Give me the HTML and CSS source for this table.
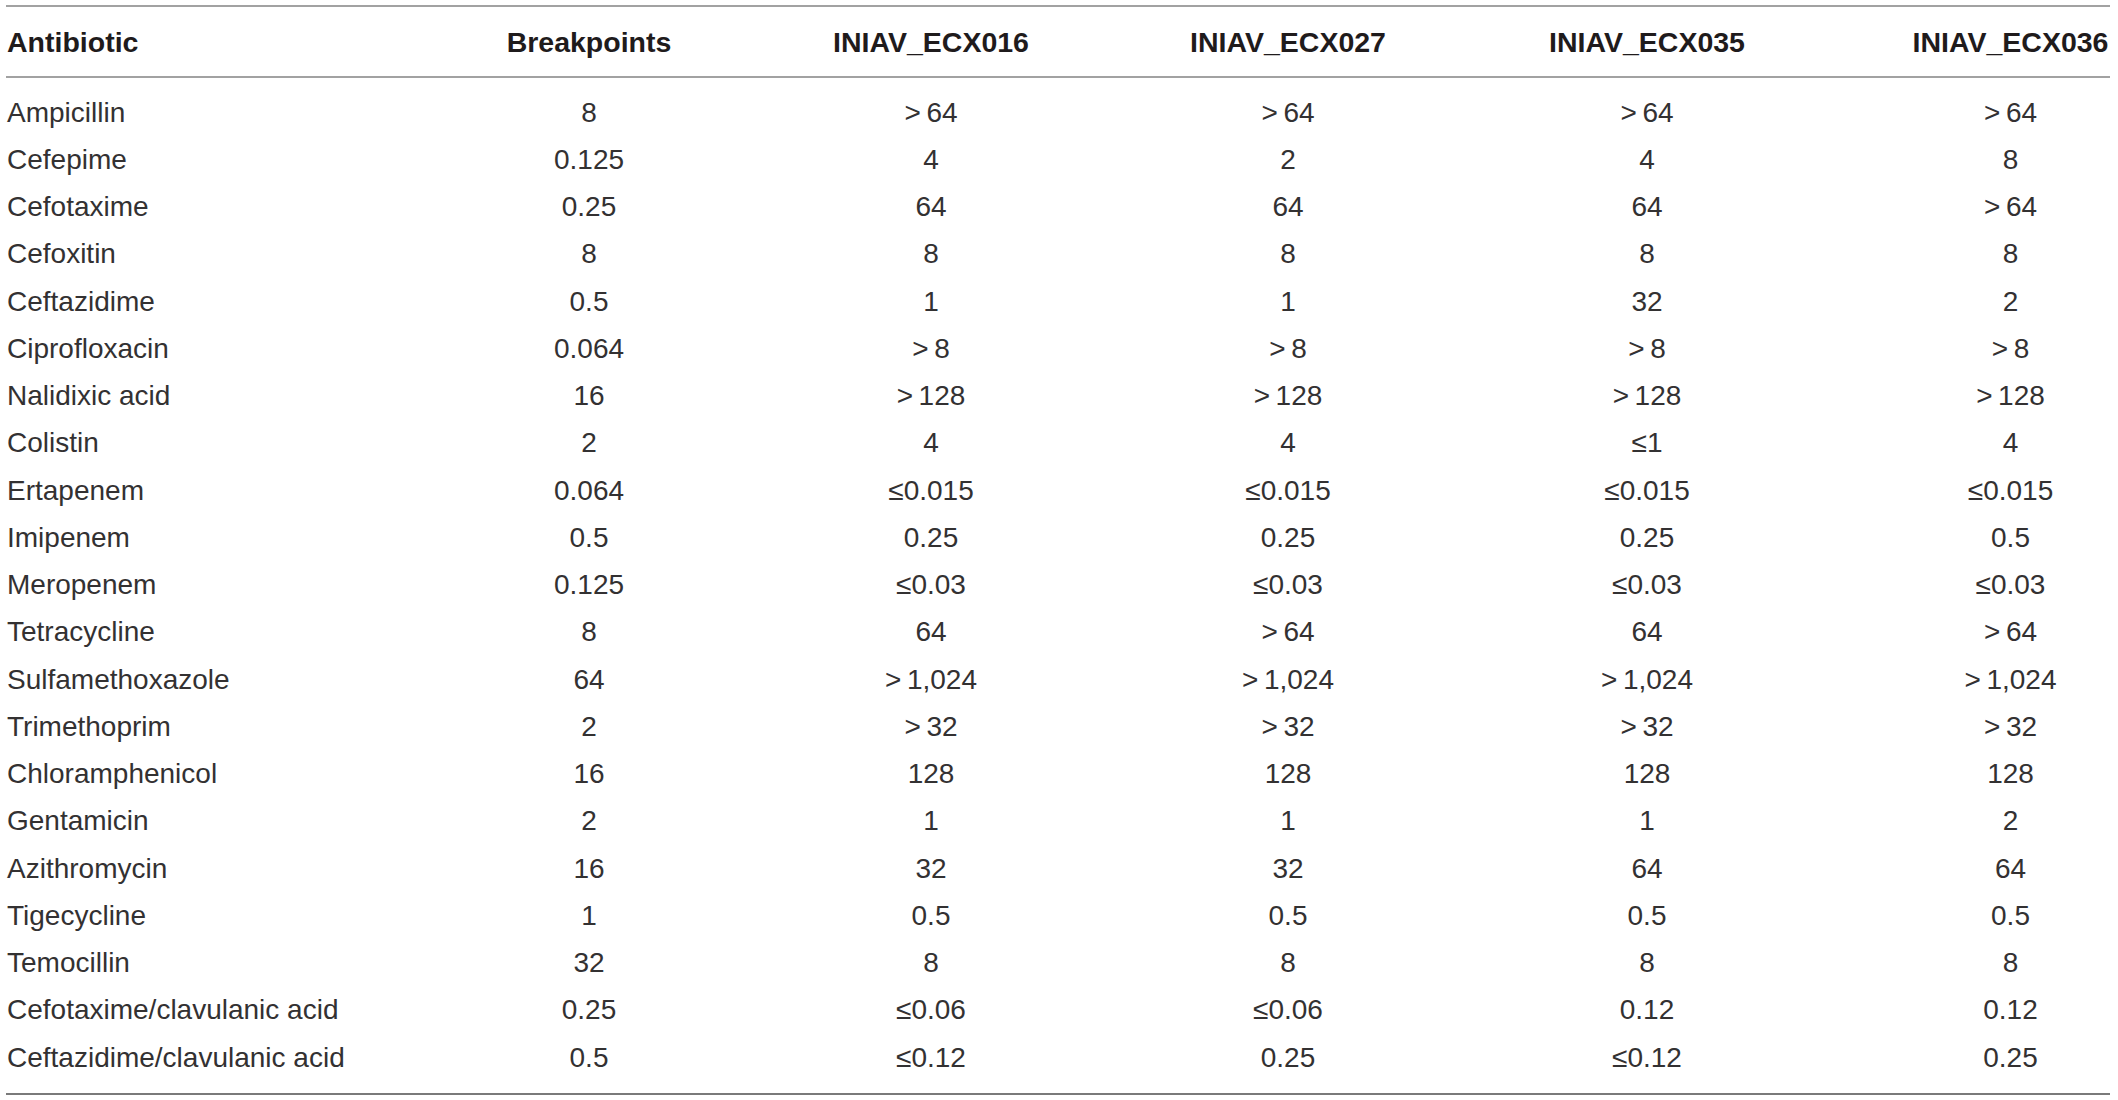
FILE: index.html
```html
<!DOCTYPE html>
<html lang="en">
<head>
<meta charset="utf-8">
<title>Antibiotic MIC table</title>
<link rel="stylesheet" href="styles.css">
</head>
<body>
<table class="mic">
  <colgroup>
    <col class="c-name">
    <col class="c-bp">
    <col class="c-016">
    <col class="c-027">
    <col class="c-035">
    <col class="c-036">
  </colgroup>
  <thead>
    <tr>
      <th class="name">Antibiotic</th>
      <th>Breakpoints</th>
      <th>INIAV_ECX016</th>
      <th>INIAV_ECX027</th>
      <th>INIAV_ECX035</th>
      <th class="last">INIAV_ECX036</th>
    </tr>
  </thead>
  <tbody>
    <tr><td class="name">Ampicillin</td><td>8</td><td>&gt;&thinsp;64</td><td>&gt;&thinsp;64</td><td>&gt;&thinsp;64</td><td class="last">&gt;&thinsp;64</td></tr>
    <tr><td class="name">Cefepime</td><td>0.125</td><td>4</td><td>2</td><td>4</td><td class="last">8</td></tr>
    <tr><td class="name">Cefotaxime</td><td>0.25</td><td>64</td><td>64</td><td>64</td><td class="last">&gt;&thinsp;64</td></tr>
    <tr><td class="name">Cefoxitin</td><td>8</td><td>8</td><td>8</td><td>8</td><td class="last">8</td></tr>
    <tr><td class="name">Ceftazidime</td><td>0.5</td><td>1</td><td>1</td><td>32</td><td class="last">2</td></tr>
    <tr><td class="name">Ciprofloxacin</td><td>0.064</td><td>&gt;&thinsp;8</td><td>&gt;&thinsp;8</td><td>&gt;&thinsp;8</td><td class="last">&gt;&thinsp;8</td></tr>
    <tr><td class="name">Nalidixic acid</td><td>16</td><td>&gt;&thinsp;128</td><td>&gt;&thinsp;128</td><td>&gt;&thinsp;128</td><td class="last">&gt;&thinsp;128</td></tr>
    <tr><td class="name">Colistin</td><td>2</td><td>4</td><td>4</td><td>&le;1</td><td class="last">4</td></tr>
    <tr><td class="name">Ertapenem</td><td>0.064</td><td>&le;0.015</td><td>&le;0.015</td><td>&le;0.015</td><td class="last">&le;0.015</td></tr>
    <tr><td class="name">Imipenem</td><td>0.5</td><td>0.25</td><td>0.25</td><td>0.25</td><td class="last">0.5</td></tr>
    <tr><td class="name">Meropenem</td><td>0.125</td><td>&le;0.03</td><td>&le;0.03</td><td>&le;0.03</td><td class="last">&le;0.03</td></tr>
    <tr><td class="name">Tetracycline</td><td>8</td><td>64</td><td>&gt;&thinsp;64</td><td>64</td><td class="last">&gt;&thinsp;64</td></tr>
    <tr><td class="name">Sulfamethoxazole</td><td>64</td><td>&gt;&thinsp;1,024</td><td>&gt;&thinsp;1,024</td><td>&gt;&thinsp;1,024</td><td class="last">&gt;&thinsp;1,024</td></tr>
    <tr><td class="name">Trimethoprim</td><td>2</td><td>&gt;&thinsp;32</td><td>&gt;&thinsp;32</td><td>&gt;&thinsp;32</td><td class="last">&gt;&thinsp;32</td></tr>
    <tr><td class="name">Chloramphenicol</td><td>16</td><td>128</td><td>128</td><td>128</td><td class="last">128</td></tr>
    <tr><td class="name">Gentamicin</td><td>2</td><td>1</td><td>1</td><td>1</td><td class="last">2</td></tr>
    <tr><td class="name">Azithromycin</td><td>16</td><td>32</td><td>32</td><td>64</td><td class="last">64</td></tr>
    <tr><td class="name">Tigecycline</td><td>1</td><td>0.5</td><td>0.5</td><td>0.5</td><td class="last">0.5</td></tr>
    <tr><td class="name">Temocillin</td><td>32</td><td>8</td><td>8</td><td>8</td><td class="last">8</td></tr>
    <tr><td class="name">Cefotaxime/clavulanic acid</td><td>0.25</td><td>&le;0.06</td><td>&le;0.06</td><td>0.12</td><td class="last">0.12</td></tr>
    <tr><td class="name">Ceftazidime/clavulanic acid</td><td>0.5</td><td>&le;0.12</td><td>0.25</td><td>&le;0.12</td><td class="last">0.25</td></tr>
  </tbody>
</table>
</body>
</html>
```
FILE: styles.css
```css
html, body {
  margin: 0;
  padding: 0;
  background: #ffffff;
}

body {
  padding: 5px 0 0 6px;
  font-family: "Liberation Sans", Arial, sans-serif;
  color: #231f20;
}

.mic {
  table-layout: fixed;
  width: 2104px;
  border-collapse: separate;
  border-spacing: 0;
  font-size: 28px;
}

.c-name { width: 414px; }
.c-bp   { width: 338px; }
.c-016  { width: 346px; }
.c-027  { width: 368px; }
.c-035  { width: 350px; }
.c-036  { width: 288px; }

.mic th,
.mic td {
  box-sizing: border-box;
  padding: 0;
  text-align: center;
  white-space: nowrap;
  vertical-align: middle;
}

.mic th {
  font-size: 28.5px;
  font-weight: 700;
  line-height: 32px;
  padding-top: 18.5px;
  padding-bottom: 18.5px;
  border-top: 2px solid #a2a2a2;
  border-bottom: 2px solid #a2a2a2;
  color: #1f1b1c;
}

.mic td {
  font-weight: 400;
  line-height: 47.25px;
  color: #333132;
}

.mic .name {
  text-align: left;
  padding-left: 1px;
}

.mic .last {
  padding-left: 89px;
}

.mic tbody tr:first-child td {
  padding-top: 10.5px;
}

.mic tbody tr:last-child td {
  padding-bottom: 12px;
  border-bottom: 2px solid #7a7a7a;
}
```
